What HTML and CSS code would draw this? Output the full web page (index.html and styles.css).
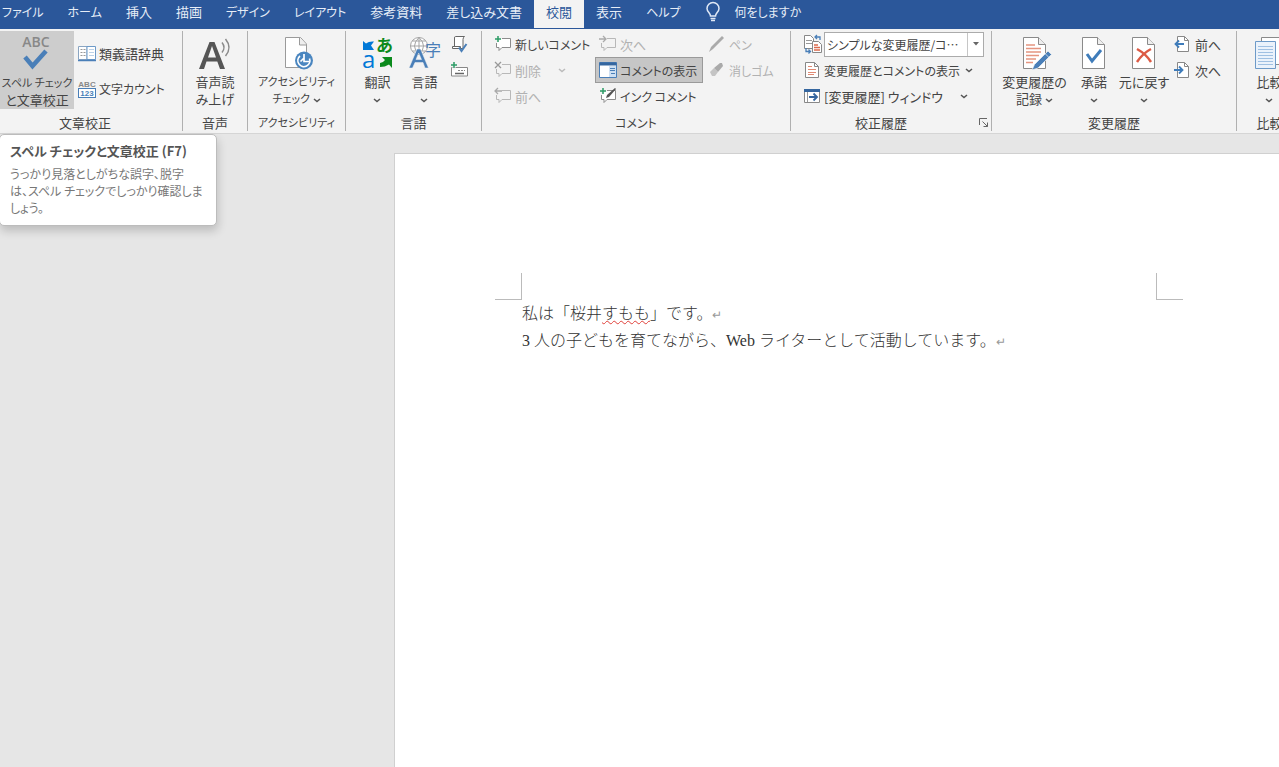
FILE: index.html
```html
<!DOCTYPE html>
<html lang="ja">
<head>
    <meta charset="UTF-8">
    <meta name="viewport" content="width=device-width, initial-scale=1.0">
    <title>文書</title>
    <link rel="stylesheet" href="styles.css">
</head>
<body>
    <!-- shared icon shapes -->
    <svg class="symbols" width="0" height="0" aria-hidden="true">
        <symbol id="chevron" viewBox="0 0 8 5">
            <path d="M1 1l3 2.600L7 1" fill="none" stroke="#555" stroke-width="1.500"/>
        </symbol>
        <symbol id="chevron-off" viewBox="0 0 8 5">
            <path d="M1 1l3 2.600L7 1" fill="none" stroke="#bbb" stroke-width="1.500"/>
        </symbol>
        <symbol id="bubble" viewBox="0 0 18 18">
            <path d="M8 3.500h8.500v9H8l-3 3v-3H2.500V8" fill="#fff" stroke="#8c8c8c"/>
        </symbol>
        <symbol id="bubble-off" viewBox="0 0 18 18">
            <path d="M8 3.500h8.500v9H8l-3 3v-3H2.500V8" fill="none" stroke="#b8b8b8"/>
        </symbol>
        <symbol id="sheet" viewBox="0 0 24 32">
            <path d="M.5 .5h15l7 7v24H.5z" fill="#fff" stroke="#8a8a8a"/>
            <path d="M15.500 .5v7h7" fill="#eee" stroke="#8a8a8a"/>
        </symbol>
        <symbol id="small-sheet" viewBox="0 0 18 18">
            <path d="M3.500 1.500h7l4 4v11h-11z" fill="#fff" stroke="#888"/>
            <path d="M10.500 1.500v4h4" fill="none" stroke="#888"/>
        </symbol>
    </svg>

    <nav class="tabs">
        <button class="tab kana">ファイル</button>
        <button class="tab kana">ホーム</button>
        <button class="tab">挿入</button>
        <button class="tab">描画</button>
        <button class="tab kana">デザイン</button>
        <button class="tab kana">レイアウト</button>
        <button class="tab">参考資料</button>
        <button class="tab">差し込み文書</button>
        <button class="tab active">校閲</button>
        <button class="tab">表示</button>
        <button class="tab kana">ヘルプ</button>
        <label class="tell-me">
            <svg width="14" height="20" viewBox="0 0 14 20">
                <path d="M4.500 14c0-3-3.500-4-3.500-7.500a6 6 0 0 1 12 0c0 3.500-3.500 4.500-3.500 7.500z" fill="none" stroke="#dfe8f6" stroke-width="1.500"/>
                <path d="M4.500 16.500h5M5 18.500h4" stroke="#dfe8f6" stroke-width="1.300"/>
            </svg>
            <input type="text" placeholder="何をしますか" aria-label="何をしますか">
        </label>
    </nav>

    <div class="ribbon">
        <section class="group proofing">
            <div class="tools">
                <button class="big pressed">
                    <svg width="36" height="34" viewBox="0 0 36 34">
                        <text x="17" y="11" class="abc-text" text-anchor="middle">ABC</text>
                        <path d="M6 21l7.500 9L27 15" fill="none" stroke="#4a7fb8" stroke-width="4.500"/>
                    </svg>
                    <span><span class="narrow">スペル チェック</span><br>と文章校正</span>
                </button>
                <div class="stack roomy">
                    <button class="small">
                        <svg width="18" height="18" viewBox="0 0 18 18">
                            <path d="M.5 1.500H9v13H.5z" fill="#fff" stroke="#8aa5c2"/>
                            <path d="M9 1.500h8.500v13H9z" fill="#fff" stroke="#6d9ac8"/>
                            <path d="M0 15.500h18" stroke="#4a7fb8" stroke-width="1.500"/>
                            <path d="M2.500 4.500h5M2.500 7.500h5M2.500 10.500h5" stroke="#999" stroke-dasharray="2 1"/>
                            <path d="M11 4.500h5M11 7.500h5M11 10.500h5" stroke="#bcd2e8"/>
                        </svg>
                        類義語辞典
                    </button>
                    <button class="small kana">
                        <svg width="18" height="20" viewBox="0 0 18 20">
                            <text x="9" y="8" class="tiny-abc" text-anchor="middle">ABC</text>
                            <rect x=".5" y="9.500" width="17" height="9" fill="#fff" stroke="#4a7fb8"/>
                            <text x="9" y="17" class="tiny-num" text-anchor="middle">123</text>
                        </svg>
                        文字カウント
                    </button>
                </div>
            </div>
            <h2 class="group-name">文章校正</h2>
        </section>

        <section class="group speech">
            <div class="tools">
                <button class="big">
                    <svg width="34" height="34" viewBox="0 0 34 34">
                        <path d="M1 33L11.500 6h5L27 33h-5l-2.700-7.500H8.500L6 33zM10 21.500h8L14 10z" fill="#555"/>
                        <path d="M24 6.500q4 5 0 10M27.500 3q7 8.500 0 17" fill="none" stroke="#8a8a8a" stroke-width="1.500"/>
                    </svg>
                    <span>音声読<br>み上げ</span>
                </button>
            </div>
            <h2 class="group-name">音声</h2>
        </section>

        <section class="group access">
            <div class="tools">
                <button class="big">
                    <svg width="32" height="34" viewBox="0 0 32 34">
                        <path d="M4.500 1.500h15l6 6.500v23.500h-21z" fill="#fff" stroke="#9a9a9a"/>
                        <path d="M18.500 1.500V9h7" fill="#eee" stroke="#9a9a9a"/>
                        <circle cx="23" cy="24.500" r="9" fill="#4a86c0"/>
                        <path d="M19 20a6 6 0 1 0 9.500 2.500" fill="none" stroke="#fff" stroke-width="1.700"/>
                        <path d="M23 18v7.500h5.500M23 22l-3.500 3.500" fill="none" stroke="#fff" stroke-width="1.700"/>
                    </svg>
                    <span class="narrow">アクセシビリティ<br>チェック <svg width="8" height="5"><use href="#chevron"/></svg></span>
                </button>
            </div>
            <h2 class="group-name narrow">アクセシビリティ</h2>
        </section>

        <section class="group language">
            <div class="tools">
                <button class="big">
                    <svg width="32" height="34" viewBox="0 0 32 34">
                        <text x="14" y="16" class="kana-text">あ</text>
                        <text x="0" y="32" class="latin-text">a</text>
                        <path d="M1 5l3 2.500Q7 5 12 5.500L9 9.500l3 4.500H1z" fill="#0078d7"/>
                        <path d="M30 32V21H20l3 3q-2 3-5 3v4q5 0 9-2.500z" fill="#0b8a1c"/>
                    </svg>
                    <span>翻訳<br><svg width="8" height="5"><use href="#chevron"/></svg></span>
                </button>
                <button class="big">
                    <svg width="34" height="34" viewBox="0 0 34 34">
                        <circle cx="11" cy="10" r="8.500" fill="#fff" stroke="#a5a5a5"/>
                        <path d="M2.500 10h17M4.500 5h13M4.500 15h13M11 1.500v17M11 1.500q-9 8.500 0 17M11 1.500q9 8.500 0 17" fill="none" stroke="#a5a5a5"/>
                        <text x="17" y="20" class="ji-text">字</text>
                        <path d="M1 32L9 13h3.500l8 19H17l-2-5.500H7L4.500 32zM8 23.500h5.500L10.700 17z" fill="#4a7fb8" stroke="#f3f3f3" stroke-width=".5"/>
                    </svg>
                    <span>言語<br><svg width="8" height="5"><use href="#chevron"/></svg></span>
                </button>
                <div class="stack">
                    <button class="small" aria-label="校正用の言語">
                        <svg width="18" height="18" viewBox="0 0 18 18">
                            <path d="M5.500 1.500h9q-1.500 1-1.500 3v9H4.500V3q0-1.500 1-1.500z" fill="#fff" stroke="#666"/>
                            <path d="M2.500 11.500h8v2h-8z" fill="#fff" stroke="#666"/>
                            <path d="M9 12.500l2.500 3.500 5-7" fill="none" stroke="#4a7fb8" stroke-width="2"/>
                        </svg>
                    </button>
                    <button class="small" aria-label="IME の更新">
                        <svg width="18" height="18" viewBox="0 0 18 18">
                            <path d="M1.500 6.500h16v8.500h-16z" fill="#fff" stroke="#888"/>
                            <path d="M8 9.500h7" stroke="#888" stroke-dasharray="2 1"/>
                            <path d="M5 12.500h9" stroke="#666" stroke-width="1.500"/>
                            <path d="M4 1v8M0 4h8" stroke="#f3f3f3" stroke-width="3"/>
                            <path d="M4 1v6M1 4h6" stroke="#2d9c66" stroke-width="1.500"/>
                        </svg>
                    </button>
                </div>
            </div>
            <h2 class="group-name">言語</h2>
        </section>

        <section class="group comments">
            <div class="tools">
                <div class="stack">
                    <button class="small kana">
                        <svg width="18" height="18" viewBox="0 0 18 18">
                            <use href="#bubble"/>
                            <path d="M4 1v6M1 4h6" stroke="#2d9c66" stroke-width="1.500"/>
                        </svg>
                        新しいコメント
                    </button>
                    <button class="small" disabled>
                        <svg width="18" height="18" viewBox="0 0 18 18">
                            <use href="#bubble-off"/>
                            <path d="M1 1l6 6M7 1L1 7" stroke="#999" stroke-width="1.300"/>
                        </svg>
                        削除
                        <svg class="far" width="8" height="5"><use href="#chevron-off"/></svg>
                    </button>
                    <button class="small" disabled>
                        <svg width="18" height="18" viewBox="0 0 18 18">
                            <use href="#bubble-off"/>
                            <path d="M8 4H1M4 1L1 4l3 3" fill="none" stroke="#aaa" stroke-width="1.300"/>
                        </svg>
                        前へ
                    </button>
                </div>
                <div class="stack">
                    <button class="small" disabled>
                        <svg width="18" height="18" viewBox="0 0 18 18">
                            <use href="#bubble-off"/>
                            <path d="M0 4h7M4 1l3 3-3 3" fill="none" stroke="#aaa" stroke-width="1.300"/>
                        </svg>
                        次へ
                    </button>
                    <button class="small kana checked">
                        <svg width="18" height="18" viewBox="0 0 18 18">
                            <path d="M.5 1.500h17v15H.5z" fill="#fff" stroke="#4a7fb8"/>
                            <path d="M.5 1.500h17v3H.5z" fill="#35669f"/>
                            <path d="M10 5h7v11h-7z" fill="#cfe0f2"/>
                            <path d="M11 7.500h5M11 9.500h5M12 12.500h4" stroke="#4a7fb8"/>
                        </svg>
                        コメントの表示
                    </button>
                    <button class="small kana">
                        <svg width="18" height="18" viewBox="0 0 18 18">
                            <use href="#bubble"/>
                            <path d="M4 1v6M1 4h6" stroke="#2d9c66" stroke-width="1.500"/>
                            <path d="M7 11l1-3 8-7 1 1-7 8z" fill="#555"/>
                        </svg>
                        インク コメント
                    </button>
                </div>
                <div class="stack">
                    <button class="small kana" disabled>
                        <svg width="18" height="18" viewBox="0 0 18 18">
                            <path d="M1 17l2-5L14 1l2 2L5 14z" fill="#aaa"/>
                        </svg>
                        ペン
                    </button>
                    <button class="small kana" disabled>
                        <svg width="18" height="18" viewBox="0 0 18 18">
                            <path d="M2 11l4-4 4 4-3 4H4z" fill="#c4c4c4"/>
                            <path d="M6 7l6-5h2l1 3-5 6z" fill="#aaa"/>
                        </svg>
                        消しゴム
                    </button>
                </div>
            </div>
            <h2 class="group-name kana">コメント</h2>
        </section>

        <section class="group tracking">
            <div class="tools">
                <div class="stack">
                    <div class="markup">
                        <svg width="20" height="20" viewBox="0 0 20 20">
                            <path d="M1.500 1.500h6l3 3v10h-9z" fill="#fff" stroke="#888"/>
                            <path d="M3 6.500h6M3 9.500h6" stroke="#999"/>
                            <path d="M9.500 7.500h6l3 3v8h-9z" fill="#fff" stroke="#888"/>
                            <path d="M11 11h4M11 13.500h6M11 16h6" stroke="#dc6a4c" stroke-width="1.300"/>
                            <path d="M17 6V3h-5M14 1l-2 2 2 2M3 14v3.500h4M5.500 15.500l2 2-2 2" fill="none" stroke="#4a7fb8" stroke-width="1.300"/>
                        </svg>
                        <div class="combo">
                            <select class="kana" aria-label="変更内容の表示">
                                <option>シンプルな変更履歴/コ…</option>
                            </select>
                            <span class="combo-arrow"><svg width="6" height="4" viewBox="0 0 6 4"><path d="M0 0h6L3 3.500z" fill="#666"/></svg></span>
                        </div>
                    </div>
                    <button class="small kana">
                        <svg width="18" height="18" viewBox="0 0 18 18">
                            <path d="M2.500 1.500h9l4 4v11h-13z" fill="#fff" stroke="#888"/>
                            <path d="M11.500 1.500v4h4" fill="none" stroke="#888"/>
                            <path d="M5 5.500h4M5 8.500h8M5 11.500h8M5 13.500h6" stroke="#e08a74"/>
                        </svg>
                        変更履歴とコメントの表示
                        <svg class="next" width="8" height="5"><use href="#chevron"/></svg>
                    </button>
                    <button class="small">
                        <svg width="18" height="18" viewBox="0 0 18 18">
                            <path d="M1.500 2.500h15v13h-15z" fill="#fff" stroke="#888"/>
                            <path d="M1 2h16v3H1z" fill="#35669f"/>
                            <path d="M4.500 5v10" stroke="#999"/>
                            <path d="M6 10h8M10.500 6.500L14 10l-3.500 3.500" fill="none" stroke="#35669f" stroke-width="1.800"/>
                        </svg>
                        [変更履歴] ウィンドウ
                        <svg class="far" width="8" height="5"><use href="#chevron"/></svg>
                    </button>
                </div>
            </div>
            <div class="group-foot">
                <h2 class="group-name">校正履歴</h2>
                <button class="launcher" aria-label="変更履歴オプション">
                    <svg width="10" height="10" viewBox="0 0 10 10">
                        <path d="M.5 7V.5H8M3.500 3.500l5 5M8.500 4.500v4h-4" fill="none" stroke="#666"/>
                    </svg>
                </button>
            </div>
        </section>

        <section class="group changes">
            <div class="tools">
                <button class="big">
                    <svg width="32" height="34" viewBox="0 0 32 34">
                        <use href="#sheet" x="4" y="1" width="24" height="32"/>
                        <path d="M7 9h9M7 12.500h15M7 16h15M7 19.500h13M7 23h10M7 26.500h7" stroke="#e59580" stroke-width="1.300"/>
                        <path d="M13 34l2.500-5.500L29 15l3.500 3.500L19 32z" fill="#4a7fb8" stroke="#f3f3f3" stroke-width=".7"/>
                        <path d="M26 17.500l4 4" stroke="#f3f3f3" stroke-width=".7"/>
                    </svg>
                    <span>変更履歴の<br>記録 <svg width="8" height="5"><use href="#chevron"/></svg></span>
                </button>
                <button class="big">
                    <svg width="24" height="34" viewBox="0 0 24 34">
                        <use href="#sheet" y="1" width="24" height="32"/>
                        <path d="M5 18l5 7 9-11" fill="none" stroke="#3f7cba" stroke-width="3"/>
                    </svg>
                    <span>承諾<br><svg width="8" height="5"><use href="#chevron"/></svg></span>
                </button>
                <button class="big">
                    <svg width="24" height="34" viewBox="0 0 24 34">
                        <use href="#sheet" y="1" width="24" height="32"/>
                        <path d="M5 13q9 5 14 13M19 13Q11 17 5 26" fill="none" stroke="#dc5b45" stroke-width="2.500"/>
                    </svg>
                    <span>元に戻す<br><svg width="8" height="5"><use href="#chevron"/></svg></span>
                </button>
                <div class="stack">
                    <button class="small">
                        <svg width="18" height="18" viewBox="0 0 18 18">
                            <use href="#small-sheet"/>
                            <path d="M10 9H2M5 5.500L1.500 9 5 12.500" fill="none" stroke="#3f7cba" stroke-width="1.800"/>
                        </svg>
                        前へ
                    </button>
                    <button class="small">
                        <svg width="18" height="18" viewBox="0 0 18 18">
                            <use href="#small-sheet"/>
                            <path d="M0 9h8M5 5.500L8.500 9 5 12.500" fill="none" stroke="#3f7cba" stroke-width="1.800"/>
                        </svg>
                        次へ
                    </button>
                </div>
            </div>
            <h2 class="group-name">変更履歴</h2>
        </section>

        <section class="group compare">
            <div class="tools">
                <button class="big">
                    <svg width="32" height="34" viewBox="0 0 32 34">
                        <path d="M7.500 1.500h18l6 6v21h-24z" fill="#fff" stroke="#8a8a8a"/>
                        <path d="M1.500 5.500h20v27h-20z" fill="#eaf2fb" stroke="#6d9ac8"/>
                        <path d="M4 10.500h15M4 13.500h15M4 16.500h15M4 19.500h15M4 22.500h15M4 25.500h15M4 28.500h15" stroke="#9fc0e2"/>
                    </svg>
                    <span>比較<br><svg width="8" height="5"><use href="#chevron"/></svg></span>
                </button>
            </div>
            <h2 class="group-name">比較</h2>
        </section>

        <div class="tooltip" role="tooltip">
            <strong>スペル チェックと文章校正 (F7)</strong>
            <p>うっかり見落としがちな誤字、脱字<br>は、スペル チェックでしっかり確認しま<br>しょう。</p>
        </div>
    </div>

    <main class="workspace">
        <article class="page">
            <div class="margin-marks">
                <span class="mark left"></span>
                <span class="mark right"></span>
            </div>
            <div class="text">
                <p>私は「桜井<span class="misspelled">すもも</span>」です。<span class="return">↵</span></p>
                <p>3 人の子どもを育てながら、Web ライターとして活動しています。<span class="return">↵</span></p>
            </div>
        </article>
    </main>
</body>
</html>
```

FILE: styles.css
```css
* {
    box-sizing: border-box;
}

body {
    margin: 0;
    min-height: 100vh;
    display: flex;
    flex-direction: column;
    overflow: hidden;
    background-color: #e6e6e6;
    color: #444;
    font-family: "Noto Sans CJK JP", sans-serif;
    font-size: 13px;
    font-feature-settings: "palt";
}

button, input, select {
    font: inherit;
    font-feature-settings: inherit;
    color: inherit;
    background: none;
    border: 0;
    padding: 0;
    margin: 0;
    white-space: nowrap;
}

svg {
    flex: none;
    overflow: visible;
}

.symbols {
    position: absolute;
}

/* labels made mostly of kana are set smaller */
.kana {
    font-size: 12px;
}

.narrow {
    font-size: 11px;
}

/* tabs */
.tabs {
    display: flex;
    height: 29px;
    background-color: #2b579a;
    color: #e6edf7;
    padding-bottom: 1px;
}

.tab {
    padding: 0 12px 5px;
}

.tab:first-child {
    padding-left: 2px;
}

.tab.active {
    background-color: #f3f3f3;
    color: #2b579a;
}

.tell-me {
    display: flex;
    align-items: center;
    gap: 14px;
    padding: 0 0 5px 14px;
}

.tell-me input {
    width: 120px;
    font-size: 12px;
}

.tell-me input::placeholder {
    color: #e6edf7;
    opacity: 1;
}

/* ribbon */
.ribbon {
    position: relative;
    display: flex;
    height: 105px;
    padding: 2px 0;
    background-color: #f3f3f3;
    border-bottom: 1px solid #d5d5d5;
}

.group {
    flex: none;
    display: flex;
    flex-direction: column;
    border-right: 1px solid #b0b0b0;
}

.proofing { width: 183px; }
.speech { width: 65px; }
.access { width: 98px; }
.language { width: 136px; }
.comments { width: 309px; }
.tracking { width: 201px; }
.changes { width: 245px; }
.compare { width: 66px; }

.tools {
    display: flex;
    height: 78px;
}

.group-name {
    margin: 5px 0 0;
    font-weight: normal;
    line-height: 17px;
    text-align: center;
}

.group-name:not(.kana):not(.narrow) {
    font-size: 13px;
}

.big {
    display: flex;
    flex-direction: column;
    align-items: center;
    gap: 3px;
    padding-top: 5px;
    line-height: 17px;
}

.big span svg {
    vertical-align: middle;
}

.pressed {
    background-color: #cdcdcd;
}

.stack {
    flex: none;
    display: flex;
    flex-direction: column;
    align-items: flex-start;
}

.small {
    display: flex;
    align-items: center;
    gap: 3px;
    height: 26px;
}

.small:disabled {
    color: #b1b1b1;
}

.far {
    margin-left: 14px;
}

.next {
    margin-left: 2px;
}

.roomy {
    padding: 5px 0 0 4px;
}

.roomy .small {
    height: 35px;
}

.proofing .big {
    width: 74px;
}

.proofing .group-name {
    padding-right: 12px;
}

.speech .tools, .access .tools, .compare .tools {
    justify-content: center;
}

.language .tools {
    padding-left: 8px;
}

.language .big {
    width: 47px;
}

.language .stack {
    padding-left: 2px;
}

.comments .tools {
    padding-left: 12px;
}

.comments .stack {
    width: 105px;
}

.comments .small.checked {
    background-color: #c6c6c6;
    border: 1px solid #9a9a9a;
    padding: 0 5px 0 3px;
    margin-left: -4px;
}

.comments .stack:last-child {
    width: auto;
    padding-left: 4px;
}

.tracking .tools {
    padding-left: 12px;
}

.markup {
    display: flex;
    align-items: center;
    gap: 1px;
    height: 26px;
}

.combo {
    display: flex;
    width: 160px;
    height: 25px;
    background-color: #fff;
    border: 1px solid #ababab;
}

.combo select {
    flex: 1;
    min-width: 0;
    padding-left: 2px;
    appearance: none;
}

.combo-arrow {
    display: flex;
    align-items: center;
    justify-content: center;
    width: 16px;
    border-left: 1px solid #c6c6c6;
}

.group-foot {
    display: flex;
    align-items: center;
    margin-top: 5px;
    padding-right: 2px;
}

.group-foot .group-name {
    flex: 1;
    margin-top: 0;
    padding-right: 8px;
}

.launcher {
    display: flex;
}

.changes .tools {
    padding-left: 8px;
}

.changes .big {
    width: 50px;
}

.changes .big:first-child {
    width: 69px;
}

.changes .stack {
    padding-left: 5px;
}

/* lettering inside icons */
.abc-text {
    font: 600 14px "Open Sans", sans-serif;
    fill: #888;
}

.tiny-abc {
    font: bold 8px "Liberation Sans", sans-serif;
    fill: #888;
}

.tiny-num {
    font: bold 8px "Liberation Sans", sans-serif;
    fill: #4a7fb8;
}

.kana-text {
    font: bold 17px "Noto Sans CJK JP", sans-serif;
    fill: #0b8a1c;
}

.latin-text {
    font: 24px "Open Sans", sans-serif;
    fill: #0078d7;
}

.ji-text {
    font: 16px "Noto Sans CJK JP", sans-serif;
    fill: #4a7fb8;
}

/* tooltip under the spelling button */
.tooltip {
    position: absolute;
    top: 105px;
    left: -1px;
    z-index: 1;
    padding: 7px 13px 9px 10px;
    background-color: #fff;
    border: 1px solid #bcbcbc;
    border-radius: 5px;
    box-shadow: 1px 5px 10px rgba(0, 0, 0, 0.18);
    white-space: nowrap;
}

.tooltip strong {
    display: block;
    line-height: 17px;
    color: #555;
}

.tooltip p {
    margin: 6px 0 0;
    font-size: 12px;
    line-height: 17px;
    color: #777;
}

/* document */
.workspace {
    flex: 1;
    display: flex;
    padding: 19px 0 0 394px;
}

.page {
    flex: 1;
    padding: 119px 96px 0 100px;
    background-color: #fff;
    border: 1px solid #d0d0d0;
    border-width: 1px 0 0 1px;
}

.margin-marks {
    display: flex;
    justify-content: space-between;
}

.mark {
    width: 27px;
    height: 27px;
    border-bottom: 1px solid #bbb;
}

.mark.left {
    border-right: 1px solid #bbb;
}

.mark.right {
    border-left: 1px solid #bbb;
}

.text {
    padding: 0 27px;
    color: #333;
    font-family: "Liberation Serif", "Noto Sans CJK JP", serif;
    font-size: 16px;
    font-weight: 300;
    font-feature-settings: normal;
    line-height: 27px;
}

.text p {
    margin: 0;
}

.misspelled {
    text-decoration: underline wavy #e0403a 1px;
}

.return {
    font-family: "DejaVu Sans", sans-serif;
    font-size: 12px;
    line-height: 1;
    color: #999;
}
```
